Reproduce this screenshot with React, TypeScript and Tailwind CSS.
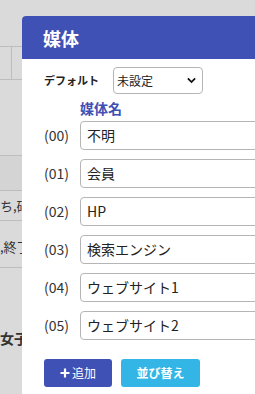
import React from "react";

const rows = [
  { code: "(00)", name: "不明" },
  { code: "(01)", name: "会員" },
  { code: "(02)", name: "HP" },
  { code: "(03)", name: "検索エンジン" },
  { code: "(04)", name: "ウェブサイト1" },
  { code: "(05)", name: "ウェブサイト2" },
];

const font = "font-['Noto_Sans_CJK_JP','Noto_Sans',sans-serif]";

export default function App() {
  return (
    <div className={`relative w-[255px] h-[394px] overflow-hidden bg-[#dadada] text-[#333] ${font}`}>
      {/* page behind the overlay */}
      <div className="flex flex-col">
        <div className="h-[46px]" />
        <div className="h-[34px] border-y border-[#bdbdbd] flex">
          <div className="w-[12px] border-r border-[#bdbdbd]" />
        </div>
        <div className="h-[75px]" />
        <div className="h-[35px] border-t border-[#bdbdbd] bg-[#d4d4d4]" />
        <div className="h-[30px] border-t border-[#bdbdbd] flex items-center text-[13px] whitespace-nowrap">
          ち,硝子
        </div>
        <div className="h-[48px] border-y border-[#bdbdbd] flex items-start pt-[16px] text-[13px] whitespace-nowrap">
          ,終了
        </div>
        <div className="pt-[60px] text-[14px] font-bold whitespace-nowrap">女子</div>
      </div>

      {/* modal */}
      <div className="absolute left-[22px] top-[16px] w-[260px] h-[400px] bg-white rounded-tl-[4px] overflow-hidden">
        <div className="h-[43px] bg-[#3f51b5] flex items-center px-[21px]">
          <span className="text-white text-[18px] font-bold leading-none">媒体</span>
        </div>

        <div className="pl-[22px] pt-[8px]">
          <div className="flex items-center">
            <span className="w-[69px] text-[11px] font-bold text-[#222]">デフォルト</span>
            <div className="w-[90px] h-[27px] border border-[#b5b5b5] rounded-[4px] flex items-center justify-between pl-[3px] pr-[6px]">
              <span className="text-[12px] text-[#222]">未設定</span>
              <svg viewBox="0 0 10 7" className="w-[9px] h-[7px]" aria-hidden>
                <path d="M1 1.2 5 5.2 9 1.2" fill="none" stroke="#111" strokeWidth="2" />
              </svg>
            </div>
          </div>

          <div className="mt-[6px] pl-[36px] text-[14px] font-bold text-[#3f51b5] leading-[16px]">媒体名</div>

          <div className="mt-[5px] flex flex-col gap-[9px]">
            {rows.map((r) => (
              <div key={r.code} className="flex items-center">
                <span className="w-[36px] text-[14px] text-[#333]">{r.code}</span>
                <div className="w-[200px] h-[29px] border border-[#b5b5b5] rounded-[4px] flex items-center px-[6px] text-[14px] text-[#222]">
                  {r.name}
                </div>
              </div>
            ))}
          </div>

          <div className="mt-[19px] flex gap-[9px]">
            <button
              type="button"
              className="w-[68px] h-[28px] rounded-[3px] bg-[#3f51b5] text-white text-[12px] flex items-center justify-center gap-[2px]"
            >
              <svg viewBox="0 0 10 10" className="w-[10px] h-[10px]" aria-hidden>
                <path d="M5 0.5v9M0.5 5h9" stroke="#fff" strokeWidth="2.2" />
              </svg>
              追加
            </button>
            <button
              type="button"
              className="w-[79px] h-[28px] rounded-[3px] bg-[#33b5e5] text-white text-[12px] font-bold flex items-center justify-center"
            >
              並び替え
            </button>
          </div>
        </div>
      </div>
    </div>
  );
}
